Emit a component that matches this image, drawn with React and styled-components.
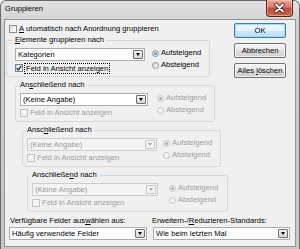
import React from "react";
import styled, { createGlobalStyle } from "styled-components";

const GlobalStyles = createGlobalStyle`
  html, body {
    margin: 0;
    padding: 0;
    background: #fff;
    overflow: hidden;
  }
  body {
    font-family: "Liberation Sans", Arial, sans-serif;
    font-size: 7.6px;
    color: #000;
  }
  * {
    box-sizing: border-box;
  }
`;

const groups = [
  { label: "Anschließend nach", key: 2, value: "(Keine Angabe)", comboDisabled: false, left: 9, width: 200, combo: 128, gap: 9, top: 3 },
  { label: "Anschließend nach", key: 4, value: "(Keine Angabe)", comboDisabled: true, left: 16, width: 199, combo: 130, gap: 6, top: 3 },
  { label: "Anschließend nach", key: 10, value: "(Keine Angabe)", comboDisabled: true, left: 21, width: 201, combo: 126, gap: 11, top: 3 },
];

const Mnemonic = ({ text, at }) => (
  <>
    {text.slice(0, at)}
    <Key>{text[at]}</Key>
    {text.slice(at + 1)}
  </>
);

const Combo = ({ value, width, disabled }) => (
  <ComboBox $w={width} $disabled={disabled}>
    <ComboText>{value}</ComboText>
    <DropButton $disabled={disabled}>
      <Arrow $disabled={disabled} />
    </DropButton>
  </ComboBox>
);

const Check = ({ checked, disabled, focus, children, margin }) => (
  <CheckRow $disabled={disabled} $m={margin}>
    <Box $disabled={disabled} $checked={checked}>
      {checked && (
        <svg width="6" height="6" viewBox="0 0 6 6">
          <path d="M0.6 3.1 L2.3 4.9 L5.4 0.9" fill="none" stroke="#23324d" strokeWidth="1.3" />
        </svg>
      )}
    </Box>
    {focus ? <Focus>{children}</Focus> : children}
  </CheckRow>
);

const Radios = ({ gap, disabled }) => (
  <RadioCol $gap={gap}>
    <RadioRow $disabled={disabled}>
      <Radio $disabled={disabled}>
        <Dot $disabled={disabled} />
      </Radio>
      Aufsteigend
    </RadioRow>
    <RadioRow $disabled={disabled}>
      <Radio $disabled={disabled} />
      Absteigend
    </RadioRow>
  </RadioCol>
);

const App = () => {
  return (
    <>
      <GlobalStyles />
      <Window>
        <TitleBar>
          <Title>Gruppieren</Title>
          <CloseButton>
            <svg width="27" height="17" viewBox="0 0 27 17">
              <path d="M10 4.5 L17 11.5 M17 4.5 L10 11.5" stroke="#3b1512" strokeWidth="3.4" strokeLinecap="round" />
              <path d="M10 4.5 L17 11.5 M17 4.5 L10 11.5" stroke="#fff" strokeWidth="1.8" strokeLinecap="round" />
            </svg>
          </CloseButton>
        </TitleBar>

        <Client>
          <TopArea>
            <LeftCol>
              <Check margin="4px 0 0 3px">
                <Mnemonic text="Automatisch nach Anordnung gruppieren" at={0} />
              </Check>

              <Group $left={0} $w={204} $top={1} $pl={8}>
                <Legend>
                  <Mnemonic text="Elemente gruppieren nach" at={0} />
                </Legend>
                <GroupBody>
                  <Stack>
                    <Combo value="Kategorien" width={130} />
                    <Check checked focus margin="2px 0 0 0">
                      Feld in Ansicht anzeigen
                    </Check>
                  </Stack>
                  <Radios gap={7} />
                </GroupBody>
              </Group>

              {groups.map((g, i) => (
                <Group key={i} $left={g.left} $w={g.width} $top={g.top} $pl={4}>
                  <Legend>
                    <Mnemonic text={g.label} at={g.key} />
                  </Legend>
                  <GroupBody>
                    <Stack>
                      <Combo value={g.value} width={g.combo} disabled={g.comboDisabled} />
                      <Check disabled margin="2px 0 0 0">
                        Feld in Ansicht anzeigen
                      </Check>
                    </Stack>
                    <Radios gap={g.gap} disabled />
                  </GroupBody>
                </Group>
              ))}
            </LeftCol>

            <ButtonCol>
              <Button $default>OK</Button>
              <Button>Abbrechen</Button>
              <Button>
                Alles <Mnemonic text="löschen" at={0} />
              </Button>
            </ButtonCol>
          </TopArea>

          <BottomRow>
            <Field $w={138}>
              <FieldLabel $pl={1}>
                <Mnemonic text="Verfügbare Felder auswählen aus:" at={21} />
              </FieldLabel>
              <Combo value="Häufig verwendete Felder" width={138} />
            </Field>
            <Field $w={138} $ml={5}>
              <FieldLabel>
                <Mnemonic text="Erweitern-/Reduzieren-Standards:" at={11} />
              </FieldLabel>
              <ComboIndent>
                <Combo value="Wie beim letzten Mal" width={137} />
              </ComboIndent>
            </Field>
          </BottomRow>
        </Client>
      </Window>
    </>
  );
};

const Window = styled.div`
  width: 300px;
  height: 249px;
  display: flex;
  flex-direction: column;
  background: linear-gradient(#e2e2e2, #cdcdcd 12%, #c6c6c6);
  border: 1px solid #6b6b6b;
  border-bottom: 0;
  border-radius: 6px 6px 0 0;
  padding: 0 3px 2px 3px;
`;

const TitleBar = styled.div`
  height: 18px;
  display: flex;
  align-items: flex-start;
  padding-left: 1px;
`;

const Title = styled.div`
  margin-top: 3px;
  line-height: 10px;
  color: #000;
`;

const CloseButton = styled.div`
  margin: -1px 3px 0 auto;
  width: 27px;
  height: 17px;
  border: 1px solid #5b2420;
  border-top: 0;
  border-radius: 0 0 4px 4px;
  background: linear-gradient(#e9a99b, #d47a69 45%, #c24a36 50%, #c9624b);
  box-shadow: inset 0 0 0 1px rgba(255, 210, 200, 0.5);
  svg {
    display: block;
    margin-left: -1px;
  }
`;

const Client = styled.div`
  flex: 1;
  display: flex;
  flex-direction: column;
  background: #f0f0f0;
  border: 1px solid #959595;
  padding-left: 1px;
`;

const TopArea = styled.div`
  display: flex;
  align-items: flex-start;
`;

const LeftCol = styled.div`
  display: flex;
  flex-direction: column;
  align-items: flex-start;
`;

const Key = styled.span`
  text-decoration: underline;
  text-underline-offset: 1px;
`;

const CheckRow = styled.div`
  display: flex;
  align-items: center;
  gap: 2px;
  height: 10px;
  line-height: 10px;
  white-space: nowrap;
  margin: ${(p) => p.$m || 0};
  color: ${(p) => (p.$disabled ? "#9d9d9d" : "#000")};
`;

const Box = styled.span`
  flex-shrink: 0;
  width: 8px;
  height: 8px;
  display: flex;
  align-items: center;
  justify-content: center;
  border: 1px solid ${(p) => (p.$disabled ? "#c2c2c2" : p.$checked ? "#6f85a3" : "#8e8f8f")};
  background: ${(p) => (p.$disabled ? "#f4f4f4" : "linear-gradient(135deg, #dadada, #f6f6f6 70%, #ffffff)")};
`;

const Focus = styled.span`
  padding: 0 1px;
  outline: 1px dotted #000;
  line-height: 9px;
`;

const Group = styled.fieldset`
  margin: ${(p) => p.$top}px 0 0 ${(p) => p.$left}px;
  width: ${(p) => p.$w}px;
  min-width: 0;
  border: 1px solid #cfd9e0;
  border-radius: 3px;
  padding: 3px 0 3px ${(p) => p.$pl}px;
`;

const Legend = styled.legend`
  padding: 0 2px;
  margin-left: -2px;
  height: 10px;
  line-height: 10px;
  white-space: nowrap;
  color: #000;
`;

const GroupBody = styled.div`
  display: flex;
  align-items: flex-start;
`;

const Stack = styled.div`
  display: flex;
  flex-direction: column;
  align-items: flex-start;
`;

const ComboBox = styled.div`
  width: ${(p) => p.$w}px;
  height: 13px;
  display: flex;
  align-items: center;
  padding-left: 2px;
  border: 1px solid ${(p) => (p.$disabled ? "#c9ccd0" : "#abadb3")};
  background: ${(p) => (p.$disabled ? "#f4f4f4" : "#fff")};
  color: ${(p) => (p.$disabled ? "#9a9a9a" : "#000")};
  line-height: 11px;
`;

const ComboText = styled.span`
  flex: 1;
  white-space: nowrap;
  overflow: hidden;
`;

const DropButton = styled.span`
  width: 10px;
  height: 9px;
  margin-right: 1px;
  display: flex;
  align-items: center;
  justify-content: center;
  border: 1px solid ${(p) => (p.$disabled ? "#c6c6c6" : "#6e6e6e")};
  border-radius: 1px;
  background: ${(p) => (p.$disabled ? "#f4f4f4" : "linear-gradient(#f4f4f4, #e4e4e4 50%, #d6d6d6)")};
`;

const Arrow = styled.span`
  width: 0;
  height: 0;
  border-left: 2.5px solid transparent;
  border-right: 2.5px solid transparent;
  border-top: 3px solid ${(p) => (p.$disabled ? "#a8a8a8" : "#000")};
`;

const RadioCol = styled.div`
  display: flex;
  flex-direction: column;
  margin: -1px 0 0 ${(p) => p.$gap}px;
`;

const RadioRow = styled.div`
  display: flex;
  align-items: center;
  gap: 2px;
  height: 12px;
  line-height: 12px;
  white-space: nowrap;
  color: ${(p) => (p.$disabled ? "#9d9d9d" : "#000")};
`;

const Radio = styled.span`
  width: 7px;
  height: 7px;
  border-radius: 50%;
  display: flex;
  align-items: center;
  justify-content: center;
  border: 1px solid ${(p) => (p.$disabled ? "#c2c2c2" : "#8e8f8f")};
  background: ${(p) => (p.$disabled ? "#f4f4f4" : "linear-gradient(135deg, #d6d6d6, #fafafa)")};
`;

const Dot = styled.span`
  width: 3px;
  height: 3px;
  border-radius: 50%;
  background: ${(p) => (p.$disabled ? "#a9a9a9" : "radial-gradient(circle at 35% 35%, #8cc6f2, #1f5fae)")};
`;

const ButtonCol = styled.div`
  display: flex;
  flex-direction: column;
  gap: 5px;
  margin: 3px 9px 0 auto;
`;

const Button = styled.button`
  width: 52px;
  height: 15px;
  padding: 0;
  font: inherit;
  line-height: 13px;
  color: #000;
  white-space: nowrap;
  border: 1px solid ${(p) => (p.$default ? "#3c7fb1" : "#707070")};
  border-radius: 2px;
  background: ${(p) =>
    p.$default
      ? "linear-gradient(#f2f9fd, #e3f1fb 50%, #cfe7f7 50%, #bfdff4)"
      : "linear-gradient(#f2f2f2, #ebebeb 50%, #dddddd 50%, #cfcfcf)"};
  box-shadow: inset 0 0 0 1px ${(p) => (p.$default ? "rgba(150, 215, 250, 0.9)" : "rgba(255, 255, 255, 0.7)")};
`;

const BottomRow = styled.div`
  display: flex;
  align-items: flex-start;
  margin: 4px 0 0 3px;
`;

const Field = styled.div`
  width: ${(p) => p.$w}px;
  margin-left: ${(p) => p.$ml || 0}px;
  display: flex;
  flex-direction: column;
`;

const FieldLabel = styled.div`
  height: 10px;
  line-height: 10px;
  margin-bottom: 1px;
  padding-left: ${(p) => p.$pl || 0}px;
  white-space: nowrap;
`;

const ComboIndent = styled.div`
  padding-left: 1px;
`;

export default App;
